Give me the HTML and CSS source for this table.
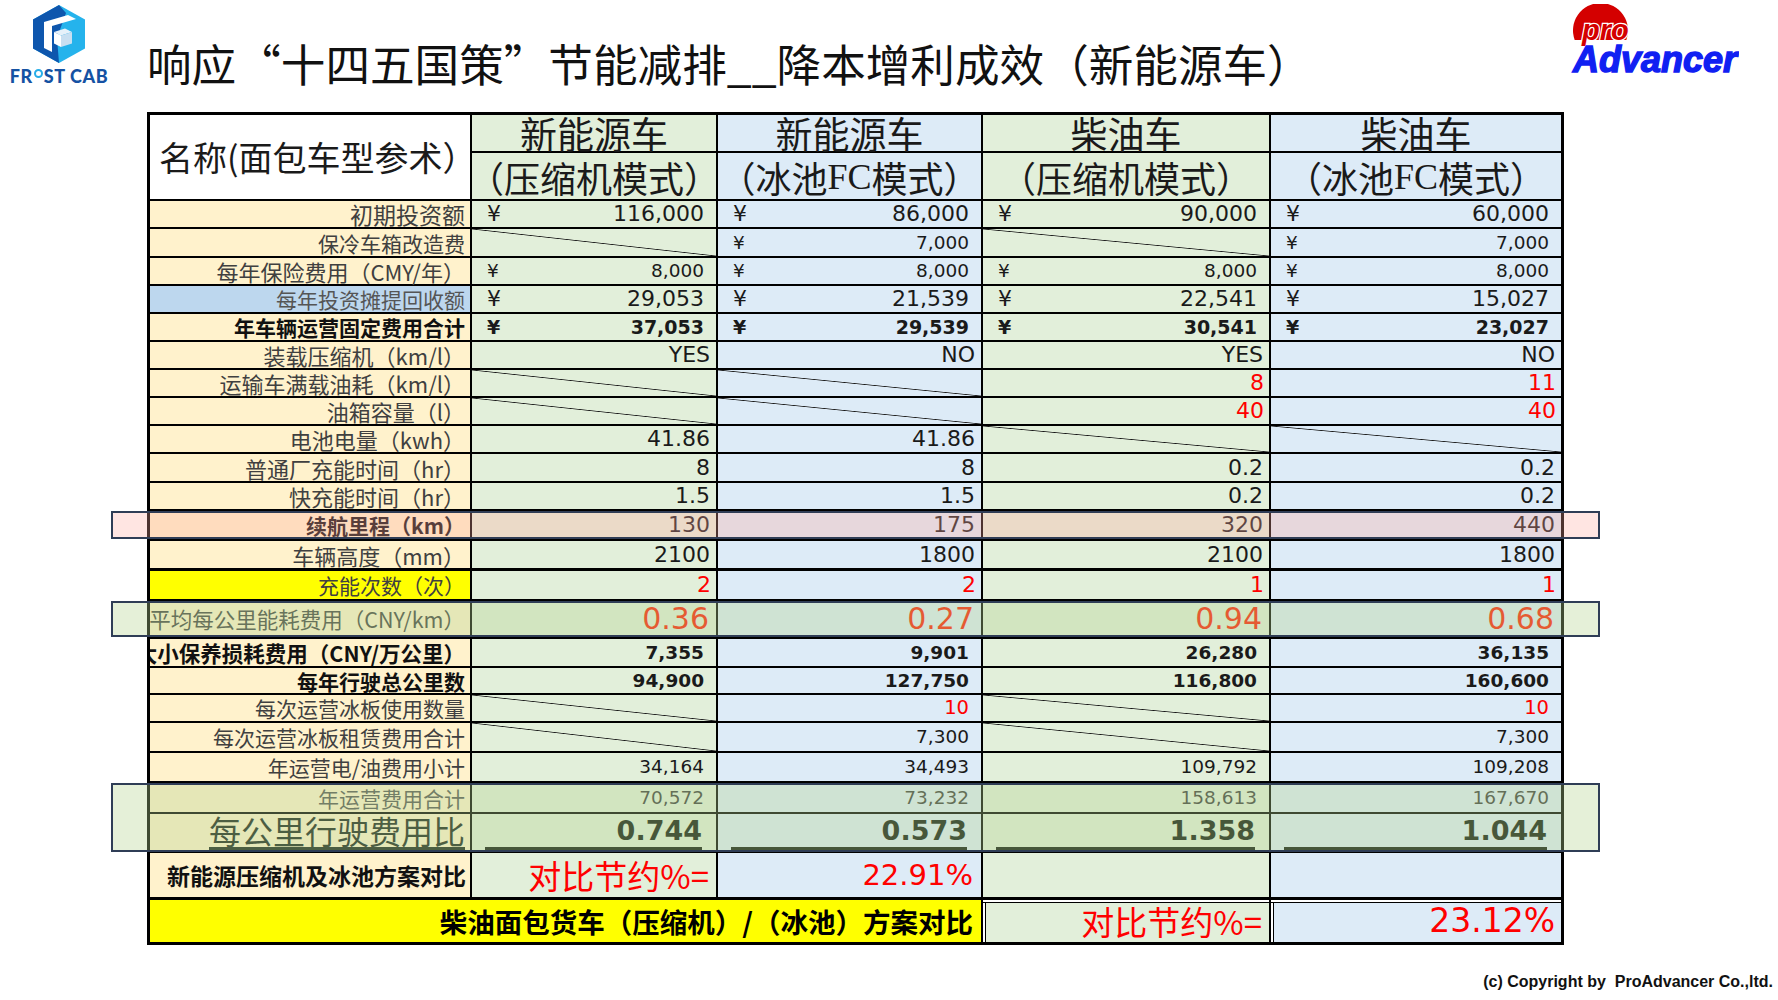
FILE: index.html
```html
<!DOCTYPE html>
<html lang="zh-CN">
<head>
<meta charset="utf-8">
<title>响应十四五国策 节能减排 降本增利成效</title>
<link rel="stylesheet" href="styles.css">
</head>
<body>
<header class="top">
  <div class="brand">
    <svg class="brand-hex" viewBox="0 0 52 58" width="52" height="58">
      <polygon points="26,0 52,14.5 52,43.5 26,58 0,43.5 0,14.5" fill="#25b3ec"/>
      <polygon points="26,0 0,14.5 0,43.5 26,58 24,33 33,8" fill="#0e56ad"/>
      <path d="M11 17 L35 10 L43 14 L19 21 L19 47 L11 43 Z" fill="#ffffff"/>
      <path d="M21 27 L32 23.5 L39 27 L28 30.5 Z" fill="#e6f1fa"/>
      <path d="M21 27 L28 30.5 L28 42 L21 38.5 Z" fill="#ffffff"/>
      <path d="M28 30.5 L39 27 L39 38.5 L28 42 Z" fill="#c9dff1"/>
    </svg>
    <div class="brand-name">FR<span class="ring"></span>ST CAB</div>
  </div>
  <h1 class="title">响应“十四五国策”节能减排__降本增利成效（新能源车）</h1>
  <svg class="pro" viewBox="0 0 168 72" width="168" height="72">
    <path d="M3.7 36 A27.5 27.5 0 1 1 55.3 36 Z" fill="#d40000"/>
    <text x="11" y="36" class="pro-small">pro</text>
    <text x="2" y="68" class="pro-big" textLength="164" lengthAdjust="spacingAndGlyphs">Advancer</text>
  </svg>
</header>

<main class="sheet">
  <div class="head">
    <div class="name">名称(面包车型参术）</div>
    <div class="g h1c">新能源车</div>
    <div class="b h1c">新能源车</div>
    <div class="g h1c">柴油车</div>
    <div class="b h1c last">柴油车</div>
    <div class="g h2c">（压缩机模式）</div>
    <div class="b h2c">（冰池<span class="fc">FC</span>模式）</div>
    <div class="g h2c">（压缩机模式）</div>
    <div class="b h2c last">（冰池<span class="fc">FC</span>模式）</div>
  </div>

  <div class="row">
    <div class="lab lab-lg">初期投资额</div>
    <div class="g v cur"><span>¥</span><span>116,000</span></div>
    <div class="b v cur"><span>¥</span><span>86,000</span></div>
    <div class="g v cur"><span>¥</span><span>90,000</span></div>
    <div class="b v cur"><span>¥</span><span>60,000</span></div>
  </div>
  <div class="row h29">
    <div class="lab">保冷车箱改造费</div>
    <div class="g diag"></div>
    <div class="b v cur sm"><span>¥</span><span>7,000</span></div>
    <div class="g diag"></div>
    <div class="b v cur sm"><span>¥</span><span>7,000</span></div>
  </div>
  <div class="row">
    <div class="lab par">每年保险费用（CMY/年）</div>
    <div class="g v cur sm"><span>¥</span><span>8,000</span></div>
    <div class="b v cur sm"><span>¥</span><span>8,000</span></div>
    <div class="g v cur sm"><span>¥</span><span>8,000</span></div>
    <div class="b v cur sm"><span>¥</span><span>8,000</span></div>
  </div>
  <div class="row">
    <div class="lab lab-blue">每年投资摊提回收额</div>
    <div class="g v cur"><span>¥</span><span>29,053</span></div>
    <div class="b v cur"><span>¥</span><span>21,539</span></div>
    <div class="g v cur"><span>¥</span><span>22,541</span></div>
    <div class="b v cur"><span>¥</span><span>15,027</span></div>
  </div>
  <div class="row">
    <div class="lab strong">年车辆运营固定费用合计</div>
    <div class="g v cur bold"><span>¥</span><span>37,053</span></div>
    <div class="b v cur bold"><span>¥</span><span>29,539</span></div>
    <div class="g v cur bold"><span>¥</span><span>30,541</span></div>
    <div class="b v cur bold"><span>¥</span><span>23,027</span></div>
  </div>
  <div class="row">
    <div class="lab par">装载压缩机（km/l）</div>
    <div class="g v">YES</div>
    <div class="b v">NO</div>
    <div class="g v">YES</div>
    <div class="b v">NO</div>
  </div>
  <div class="row">
    <div class="lab par">运输车满载油耗（km/l）</div>
    <div class="g diag"></div>
    <div class="b diag"></div>
    <div class="g v red">8</div>
    <div class="b v red">11</div>
  </div>
  <div class="row">
    <div class="lab par">油箱容量（l）</div>
    <div class="g diag"></div>
    <div class="b diag"></div>
    <div class="g v red">40</div>
    <div class="b v red">40</div>
  </div>
  <div class="row">
    <div class="lab par">电池电量（kwh）</div>
    <div class="g v">41.86</div>
    <div class="b v">41.86</div>
    <div class="g diag"></div>
    <div class="b diag"></div>
  </div>
  <div class="row h29">
    <div class="lab par">普通厂充能时间（hr）</div>
    <div class="g v">8</div>
    <div class="b v">8</div>
    <div class="g v">0.2</div>
    <div class="b v">0.2</div>
  </div>
  <div class="row">
    <div class="lab par">快充能时间（hr）</div>
    <div class="g v">1.5</div>
    <div class="b v">1.5</div>
    <div class="g v">0.2</div>
    <div class="b v">0.2</div>
  </div>
  <div class="row h30 hl hl-pink">
    <div class="lab strong">续航里程（km）</div>
    <div class="g v">130</div>
    <div class="b v">175</div>
    <div class="g v">320</div>
    <div class="b v">440</div>
  </div>
  <div class="row h30 dbl">
    <div class="lab par">车辆高度（mm）</div>
    <div class="g v">2100</div>
    <div class="b v">1800</div>
    <div class="g v">2100</div>
    <div class="b v">1800</div>
  </div>
  <div class="row h30">
    <div class="lab lab-yellow">充能次数（次）</div>
    <div class="g v red">2</div>
    <div class="b v red">2</div>
    <div class="g v red">1</div>
    <div class="b v red">1</div>
  </div>
  <div class="row h38 hl hl-green">
    <div class="lab lab-avg">平均每公里能耗费用（CNY/km）</div>
    <div class="g v big">0.36</div>
    <div class="b v big">0.27</div>
    <div class="g v big">0.94</div>
    <div class="b v big">0.68</div>
  </div>
  <div class="row h29">
    <div class="lab strong lab-avg clip">大小保养损耗费用（CNY/万公里）</div>
    <div class="g v tot">7,355</div>
    <div class="b v tot">9,901</div>
    <div class="g v tot">26,280</div>
    <div class="b v tot">36,135</div>
  </div>
  <div class="row h27">
    <div class="lab strong">每年行驶总公里数</div>
    <div class="g v tot">94,900</div>
    <div class="b v tot">127,750</div>
    <div class="g v tot">116,800</div>
    <div class="b v tot">160,600</div>
  </div>
  <div class="row">
    <div class="lab">每次运营冰板使用数量</div>
    <div class="g diag"></div>
    <div class="b v red sm">10</div>
    <div class="g diag"></div>
    <div class="b v red sm">10</div>
  </div>
  <div class="row h30">
    <div class="lab">每次运营冰板租赁费用合计</div>
    <div class="g diag"></div>
    <div class="b v sum sm">7,300</div>
    <div class="g diag"></div>
    <div class="b v sum sm">7,300</div>
  </div>
  <div class="row h30">
    <div class="lab">年运营电/油费用小计</div>
    <div class="g v sum sm">34,164</div>
    <div class="b v sum sm">34,493</div>
    <div class="g v sum sm">109,792</div>
    <div class="b v sum sm">109,208</div>
  </div>
  <div class="row h31 hl hl-green hl-two">
    <div class="lab lab-dim">年运营费用合计</div>
    <div class="g v sum sm dim">70,572</div>
    <div class="b v sum sm dim">73,232</div>
    <div class="g v sum sm dim">158,613</div>
    <div class="b v sum sm dim">167,670</div>
  </div>
  <div class="row h39">
    <div class="lab lab-rate"><span>每公里行驶费用比</span></div>
    <div class="g rate"><span>0.744</span></div>
    <div class="b rate"><span>0.573</span></div>
    <div class="g rate"><span>1.358</span></div>
    <div class="b rate"><span>1.044</span></div>
  </div>
  <div class="row h47">
    <div class="lab strong lab-cmp">新能源压缩机及冰池方案对比</div>
    <div class="g v cmp">对比节约%=</div>
    <div class="b v pct">22.91%</div>
    <div class="g"></div>
    <div class="b"></div>
  </div>
  <div class="row h42 final">
    <div class="lab final-lab">柴油面包货车（压缩机）/（冰池）方案对比</div>
    <div class="g v cmp framed">对比节约%=</div>
    <div class="b v pct pct-lg framed">23.12%</div>
  </div>
</main>

<footer class="copy">(c) Copyright by&nbsp;&nbsp;ProAdvancer Co.,ltd.</footer>
</body>
</html>
```

FILE: styles.css
```css
* { box-sizing: border-box; }

html, body {
  margin: 0;
  padding: 0;
}

body {
  width: 1778px;
  height: 1000px;
  overflow: hidden;
  background: #ffffff;
  font-family: "Noto Sans CJK SC", "Noto Sans", sans-serif;
  color: #1a1a1a;
}

/* ---------- top bar ---------- */
.top {
  display: flex;
  height: 112px;
}

.brand {
  width: 100px;
  margin-left: 9px;
  padding-top: 5px;
  display: flex;
  flex-direction: column;
  align-items: center;
}

.brand-hex {
  display: block;
  width: 52px;
  height: 58px;
}

.brand-name {
  margin-top: 4px;
  font-family: Lato, "Noto Sans", sans-serif;
  font-weight: 900;
  font-size: 18px;
  line-height: 18px;
  letter-spacing: 0.6px;
  color: #1552a3;
  white-space: nowrap;
}

.ring {
  display: inline-block;
  width: 9px;
  height: 9px;
  margin: 0 1px;
  border: 2.5px solid #27aee8;
  border-radius: 50%;
  vertical-align: 5px;
}

.title {
  margin: 40px 0 0 38px;
  font-size: 44.6px;
  line-height: 46px;
  font-weight: 400;
  color: #111111;
  white-space: nowrap;
}

.pro {
  display: block;
  margin: 4px 39px 0 auto;
}

.pro-small {
  font-family: "Liberation Sans", Arial, sans-serif;
  font-weight: 700;
  font-style: italic;
  font-size: 29px;
  fill: #d40000;
  stroke: #ffffff;
  stroke-width: 2.5px;
  paint-order: stroke;
}

.pro-big {
  font-family: "Liberation Sans", Arial, sans-serif;
  font-weight: 700;
  font-style: italic;
  font-size: 36px;
  fill: #1020f2;
  stroke: #1020f2;
  stroke-width: 1.4px;
}

/* ---------- sheet ---------- */
.sheet {
  position: relative;
  width: 1417px;
  margin-left: 147px;
  border: 3px solid #000000;
}

.head {
  display: grid;
  grid-template-columns: 322px 246px 265px 288px 290px;
  grid-template-rows: 38px 48px;
}

.head > div {
  display: flex;
  align-items: center;
  justify-content: center;
  border-right: 2px solid #000000;
  border-bottom: 2px solid #000000;
  white-space: nowrap;
  color: #1a1a1a;
}

.head > div.last { border-right: none; }

.head .name {
  grid-row: 1 / 3;
  justify-content: flex-start;
  padding-left: 9px;
  background: #ffffff;
  font-size: 34px;
  line-height: 40px;
}

.h1c {
  font-size: 37px;
  line-height: 36px;
}

.h2c {
  font-size: 36px;
  line-height: 42px;
  padding-top: 2px;
}

.fc {
  font-family: "Liberation Serif", serif;
}

.row {
  position: relative;
  display: grid;
  grid-template-columns: 322px 246px 265px 288px 290px;
  height: 28px;
  border-bottom: 2px solid #000000;
}

.row > div {
  min-width: 0;
  border-right: 2px solid #000000;
}

.row > div:last-child { border-right: none; }

.h27 { height: 27px; }
.h29 { height: 29px; }
.h30 { height: 30px; }
.h31 { height: 31px; }
.h38 { height: 38px; }
.h39 { height: 39px; border-bottom-width: 3px; }
.h47 { height: 47px; border-bottom-width: 3px; }
.h42 { height: 42px; border-bottom: none; }
.dbl { border-bottom-width: 3px; }

.g { background-color: #e2efda; }
.b { background-color: #ddebf7; }

.diag {
  background-image: linear-gradient(to top right,
    transparent calc(50% - 0.8px),
    #1a1a1a 50%,
    transparent calc(50% + 0.8px));
}

/* labels */
.lab {
  display: flex;
  align-items: center;
  justify-content: flex-end;
  padding-right: 5px;
  white-space: nowrap;
  background: #fff2cc;
  font-size: 21px;
  line-height: 24px;
  color: #404040;
}

.lab.clip { overflow: hidden; }
.lab.par { font-size: 22px; }
.lab-lg { font-size: 23px; }
.lab-avg { font-size: 21.5px; }
.lab-blue { background: #bdd7ee; color: #555555; }
.lab-yellow { background: #ffff00; }
.lab-dim { color: #505050; }
.strong { font-weight: 700; color: #111111; }
.lab-cmp { font-size: 23px; padding-right: 4px; }

.lab-rate {
  align-items: flex-end;
  padding-bottom: 1px;
}

.lab-rate span {
  font-size: 32px;
  line-height: 33px;
  color: #14201a;
  border-bottom: 3px solid #14201a;
}

/* values */
.v {
  display: flex;
  align-items: center;
  justify-content: flex-end;
  padding: 0 6px 0 15px;
  white-space: nowrap;
  font-family: "DejaVu Sans", sans-serif;
  font-size: 22px;
  line-height: 24px;
  color: #1a1a1a;
}

.v.cur {
  justify-content: space-between;
  padding-right: 12px;
}

.v.sm { font-size: 18.5px; }
.v.bold { font-weight: 700; font-size: 19px; }
.v.tot { font-weight: 700; font-size: 18.5px; padding-right: 12px; }
.v.sum { padding-right: 12px; }
.v.dim { color: #3a3a3a; }
.v.red { color: #ff0000; padding-right: 5px; }
.v.sm.red { padding-right: 12px; font-size: 19.5px; }

.v.big {
  font-size: 30px;
  line-height: 34px;
  color: #ff1a00;
  padding-right: 7px;
}

.rate {
  display: flex;
  align-items: flex-end;
  padding: 0 14px 1px 13px;
}

.rate span {
  flex: 1;
  text-align: right;
  font-family: "DejaVu Sans", sans-serif;
  font-weight: 700;
  font-size: 27px;
  line-height: 32px;
  color: #0d150d;
  border-bottom: 3px solid #0d150d;
}

.v.cmp {
  font-family: "Noto Sans CJK SC", sans-serif;
  font-size: 33px;
  line-height: 40px;
  color: #ff0000;
  padding-right: 7px;
}

.v.pct {
  font-size: 29px;
  line-height: 36px;
  color: #ff0000;
  padding-right: 8px;
}

.v.pct-lg {
  font-size: 33px;
  padding-right: 6px;
}

.final-lab {
  grid-column: 1 / 4;
  background: #ffff00;
  padding-right: 8px;
  font-size: 27.5px;
  line-height: 36px;
  font-weight: 700;
  color: #000000;
}

.framed {
  box-shadow: inset 0 2px 0 #ffffff, inset 0 3px 0 #000000,
              inset 2px 0 0 #ffffff, inset 3px 0 0 #000000;
}

/* highlight boxes laid over rows */
.hl::after {
  content: "";
  position: absolute;
  z-index: 1;
  left: -39px;
  right: -39px;
  top: 0;
  bottom: 0;
  border: 2px solid #2f3d56;
  pointer-events: none;
}

.hl-pink::after { background: rgba(255, 170, 160, 0.3); }
.hl-green::after { background: rgba(181, 212, 144, 0.35); }
.hl-two::after { bottom: -40px; }

/* footer */
.copy {
  margin-top: 26px;
  padding-right: 5px;
  text-align: right;
  font-family: "Liberation Sans", Arial, sans-serif;
  font-weight: 700;
  font-size: 16px;
  line-height: 22px;
  color: #111111;
}
```
